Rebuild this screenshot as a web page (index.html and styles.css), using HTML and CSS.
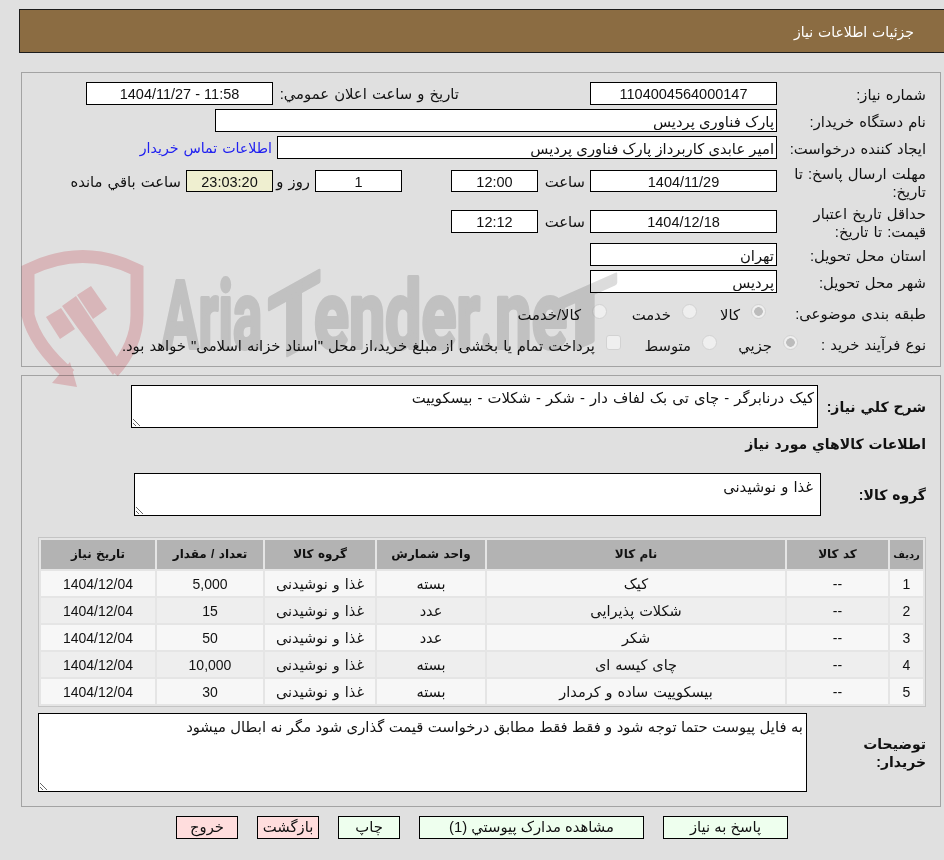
FILE: index.html
```html
<!DOCTYPE html>
<html lang="fa" dir="rtl">
<head>
<meta charset="utf-8">
<title>جزئیات اطلاعات نیاز</title>
<link rel="stylesheet" href="styles.css">
</head>
<body>
<header class="header">جزئیات اطلاعات نیاز</header>

<section class="panel panel-info">
  <div class="row">
    <label class="lbl">شماره نياز:</label>
    <input class="fld w187 ctr" readonly value="1104004564000147">
    <label class="lbl-pub">تاريخ و ساعت اعلان عمومي:</label>
    <input class="fld w187 ctr" readonly value="11:58 - 1404/11/27">
  </div>
  <div class="row">
    <label class="lbl">نام دستگاه خريدار:</label>
    <input class="fld w562" readonly value="پارک فناوری پردیس">
  </div>
  <div class="row">
    <label class="lbl">ايجاد کننده درخواست:</label>
    <input class="fld w500" readonly value="امیر عابدی کاربرداز پارک فناوری پردیس">
    <a class="contact" href="#">اطلاعات تماس خريدار</a>
  </div>
  <div class="row row-tall">
    <label class="lbl">مهلت ارسال پاسخ: تا تاريخ:</label>
    <input class="fld w187 ctr short" readonly value="1404/11/29">
    <span class="txt-hour">ساعت</span>
    <input class="fld w87 ctr short" readonly value="12:00">
    <input class="fld w87 ctr short days" readonly value="1">
    <span class="txt-day">روز و</span>
    <input class="fld w87 ctr short clock" readonly value="23:03:20">
    <span class="txt-left">ساعت باقي مانده</span>
  </div>
  <div class="row row-tall">
    <label class="lbl">حداقل تاريخ اعتبار قيمت: تا تاريخ:</label>
    <input class="fld w187 ctr" readonly value="1404/12/18">
    <span class="txt-hour">ساعت</span>
    <input class="fld w87 ctr" readonly value="12:12">
  </div>
  <div class="row">
    <label class="lbl">استان محل تحويل:</label>
    <input class="fld w187" readonly value="تهران">
  </div>
  <div class="row">
    <label class="lbl">شهر محل تحويل:</label>
    <input class="fld w187" readonly value="پردیس">
  </div>
  <div class="row row-subject">
    <label class="lbl lbl-flush">طبقه بندی موضوعی:</label>
    <input class="radio r1" type="radio" name="subject" checked disabled>
    <span class="opt t1">کالا</span>
    <input class="radio" type="radio" name="subject" disabled>
    <span class="opt t2">خدمت</span>
    <input class="radio" type="radio" name="subject" disabled>
    <span class="opt">کالا/خدمت</span>
  </div>
  <div class="row row-process">
    <label class="lbl lbl-short lbl-flush">نوع فرآيند خريد :</label>
    <input class="radio" type="radio" name="process" checked disabled>
    <span class="opt t3">جزيي</span>
    <input class="radio" type="radio" name="process" disabled>
    <span class="opt t4">متوسط</span>
    <input class="check" type="checkbox" disabled>
    <span class="opt">پرداخت تمام یا بخشی از مبلغ خرید،از محل "اسناد خزانه اسلامی" خواهد بود.</span>
  </div>
</section>

<section class="panel panel-goods">
  <div class="row-area">
    <label class="head-lbl w108">شرح کلي نياز:</label>
    <textarea class="area w687 h43" readonly>کیک درنابرگر - چای تی بک لفاف دار - شکر - شکلات - بیسکوییت</textarea>
  </div>
  <h2 class="goods-title">اطلاعات کالاهاي مورد نياز</h2>
  <div class="row-area group-row">
    <label class="head-lbl w105">گروه کالا:</label>
    <textarea class="area area-group w687 h43" readonly>غذا و نوشیدنی</textarea>
  </div>
  <table class="items">
    <colgroup>
      <col class="c1"><col class="c2"><col class="c3"><col class="c4"><col class="c5"><col class="c6"><col class="c7">
    </colgroup>
    <thead>
      <tr><th class="th-narrow">رديف</th><th>کد کالا</th><th>نام کالا</th><th>واحد شمارش</th><th>گروه کالا</th><th>تعداد / مقدار</th><th>تاريخ نياز</th></tr>
    </thead>
    <tbody>
      <tr><td class="num">1</td><td class="num">--</td><td>کیک</td><td>بسته</td><td>غذا و نوشیدنی</td><td class="num">5,000</td><td class="num">1404/12/04</td></tr>
      <tr><td class="num">2</td><td class="num">--</td><td>شکلات پذیرایی</td><td>عدد</td><td>غذا و نوشیدنی</td><td class="num">15</td><td class="num">1404/12/04</td></tr>
      <tr><td class="num">3</td><td class="num">--</td><td>شکر</td><td>عدد</td><td>غذا و نوشیدنی</td><td class="num">50</td><td class="num">1404/12/04</td></tr>
      <tr><td class="num">4</td><td class="num">--</td><td>چای کیسه ای</td><td>بسته</td><td>غذا و نوشیدنی</td><td class="num">10,000</td><td class="num">1404/12/04</td></tr>
      <tr><td class="num">5</td><td class="num">--</td><td>بیسکوییت ساده و کرمدار</td><td>بسته</td><td>غذا و نوشیدنی</td><td class="num">30</td><td class="num">1404/12/04</td></tr>
    </tbody>
  </table>
  <div class="row-area notes-row">
    <label class="head-lbl w119">توضیحات خریدار:</label>
    <textarea class="area area-notes w769 h79" readonly>به فایل پیوست حتما توجه شود و فقط فقط مطابق درخواست قیمت گذاری شود مگر نه ابطال میشود</textarea>
  </div>
</section>

<nav class="actions">
  <button class="btn ok b125" type="button">پاسخ به نیاز</button>
  <button class="btn ok b225" type="button">مشاهده مدارک پيوستي (1)</button>
  <button class="btn ok b63" type="button">چاپ</button>
  <button class="btn no b63" type="button">بازگشت</button>
  <button class="btn no b63" type="button">خروج</button>
</nav>

<svg class="watermark" width="944" height="860" viewBox="0 0 944 860" aria-hidden="true">
  <g class="wm-shield">
    <path class="wm-ring" d="M113,372 Q137,345 137,315 L137,270 Q83,243 28,270 L28,315 Q35,345 70,375"/>
    <polygon points="70,362 77,387 52,383"/>
    <polygon points="46,317 61,308 75,329 60,339"/>
    <polygon points="77,295 91,286 107,309 93,319"/>
    <polygon points="62,306 76,296 92,320 121,363 113,375 77,327"/>
  </g>
  <g class="wm-text">
    <text x="162" y="348" textLength="100" lengthAdjust="spacingAndGlyphs">Aria</text>
    <text transform="translate(268 366) skewY(-29) scale(.9 1)" y="0">T</text>
    <text x="314" y="348" textLength="166" lengthAdjust="spacingAndGlyphs">ender</text>
    <text x="481" y="348" textLength="11" lengthAdjust="spacingAndGlyphs">.</text>
    <text x="495" y="348" textLength="72" lengthAdjust="spacingAndGlyphs">ne</text>
    <text transform="translate(553 359) skewY(-24) scale(1.1 .85)" y="0">T</text>
  </g>
</svg>
</body>
</html>
```
FILE: styles.css
```css
* { box-sizing: border-box; }
html, body { margin: 0; padding: 0; height: 860px; overflow: hidden; }
body {
  position: relative;
  background: #e0e0e0;
  color: #111;
  font: 14.8px/17px "Liberation Sans", "DejaVu Sans", sans-serif;
  word-spacing: 1px;
}
.header {
  height: 44px;
  margin: 9px 0 0 19px;
  padding: 0 30px 0 0;
  border: 1px solid #1c1c1c;
  border-right: 0;
  background: #8b6c42;
  color: #fff;
  font-size: 14px;
  line-height: 44px;
}
.panel {
  margin: 0 3px 0 21px;
  border: 1px solid #a3a3a3;
}
.panel-info { height: 295px; margin-top: 19px; padding: 9px 14px 0 0; }
.panel-goods { height: 432px; margin-top: 8px; padding: 9px 14px 0 0; }

.row { display: flex; align-items: center; margin-bottom: 4px; height: 23px; white-space: nowrap; }
.row-tall { height: 36px; }
.row-subject { margin-top: 9px; height: 24px; margin-bottom: 6px; }
.row-process { height: 26px; }
.lbl { flex: none; width: 141px; margin-left: 8px; padding-top: 3px; white-space: normal; line-height: 18px; }
.lbl-short { width: 120px; }
.lbl-flush { padding-top: 0; padding-bottom: 1px; }
.lbl-pub { flex: none; width: 181px; margin: 0 131px 0 5px; padding-top: 2px; }

.fld {
  flex: none;
  height: 23px;
  padding: 1px 2px 0;
  border: 1px solid #000;
  border-radius: 0;
  outline: 0;
  background: #fff;
  color: #111;
  font: inherit;
  direction: rtl;
}
.short { height: 22px; }
.ctr { text-align: center; font-size: 14.5px; }
.w187 { width: 187px; }
.w87 { width: 87px; }
.w562 { width: 562px; }
.w500 { width: 500px; }
.contact { margin-right: 5px; padding-top: 2px; color: #2020f0; font-size: 14.2px; text-decoration: none; }
.txt-hour { flex: none; width: 42px; margin: 0 5px 0 5px; padding-top: 2px; }
.days { margin-right: 49px; }
.txt-day { flex: none; width: 28px; margin: 0 5px 0 9px; padding-top: 2px; }
.clock { background: #efefd0; }
.txt-left { flex: none; margin-right: 5px; padding-top: 2px; }

.radio, .check {
  appearance: none;
  flex: none;
  width: 15px;
  height: 15px;
  margin: 0 0 5px;
  border: 1px solid #d2d2d2;
  background: #efefef;
}
.radio { border-radius: 50%; }
.radio:checked { background: radial-gradient(circle, #bcbcbc 0 4px, #efefef 4.6px); }
.check { border-radius: 3px; }
.r1 { margin-right: 11px; }
.opt { flex: none; margin-right: 11px; padding-top: 2px; }
.t1 { width: 19px; margin-left: 24px; }
.t2 { width: 40px; margin-left: 24px; }
.t3 { width: 35px; margin-left: 20px; }
.t4 { width: 45px; margin-left: 25px; }

.row-area { display: flex; align-items: center; }
.head-lbl { flex: none; font-size: 14px; font-weight: 700; line-height: 18px; }
.w108 { width: 108px; }
.w105 { width: 105px; }
.w119 { width: 119px; padding-left: 30px; }
.area {
  flex: none;
  display: block;
  margin: 0;
  padding: 4px 3px 3px;
  border: 1px solid #000;
  border-radius: 0;
  outline: 0;
  background: #fff;
  color: #111;
  font: inherit;
  word-spacing: 1px;
}
.area-group { padding-top: 5px; padding-right: 7px; }
.area-notes { padding-top: 5px; word-spacing: .3px; }
.w687 { width: 687px; }
.w769 { width: 769px; }
.h43 { height: 43px; }
.h79 { height: 79px; }
.goods-title { height: 18px; margin: 7px 0 0; font-size: 14px; line-height: 18px; font-weight: 700; }
.group-row { margin-top: 20px; }
.notes-row { margin-top: 6px; }

.items {
  width: 888px;
  height: 170px;
  margin-top: 21px;
  table-layout: fixed;
  border-collapse: separate;
  border-spacing: 2px;
  border: 1px solid #c4c4c4;
  background: #e5e5e5;
}
.c1 { width: 33px; }
.c2 { width: 101px; }
.c3 { width: 298px; }
.c4 { width: 108px; }
.c5 { width: 110px; }
.c6 { width: 106px; }
.c7 { width: 114px; }
.items th {
  height: 29px;
  padding: 0;
  background: #b3b3b3;
  font-size: 12px;
  font-weight: 700;
  text-align: center;
}
.items .th-narrow { font-size: 10px; }
.items td { height: 25px; padding: 1px 0 0; text-align: center; background: #f7f7f7; font-size: 14.5px; }
.items .num { font-size: 14px; }
.items tbody tr:nth-child(even) td { background: #eeeeee; }

.actions { display: flex; gap: 19px; margin: 9px 156px 0 0; }
.btn {
  height: 23px;
  padding: 0;
  border: 1px solid #000;
  border-radius: 0;
  color: #111;
  font: inherit;
}
.ok { background: #eeffee; }
.no { background: #ffdddd; }
.b125 { width: 125px; }
.b225 { width: 225px; }
.b63 { width: 62px; }

.watermark { position: absolute; top: 0; left: 0; pointer-events: none; mix-blend-mode: multiply; }
.wm-shield { fill: #f6d0d3; }
.wm-ring { fill: none; stroke: #f6d0d3; stroke-width: 13; }
.wm-text { direction: ltr; fill: #dcdcdc; stroke: #dcdcdc; stroke-width: 4; stroke-linejoin: round; font: 700 94px Roboto, sans-serif; word-spacing: 0; }
```
